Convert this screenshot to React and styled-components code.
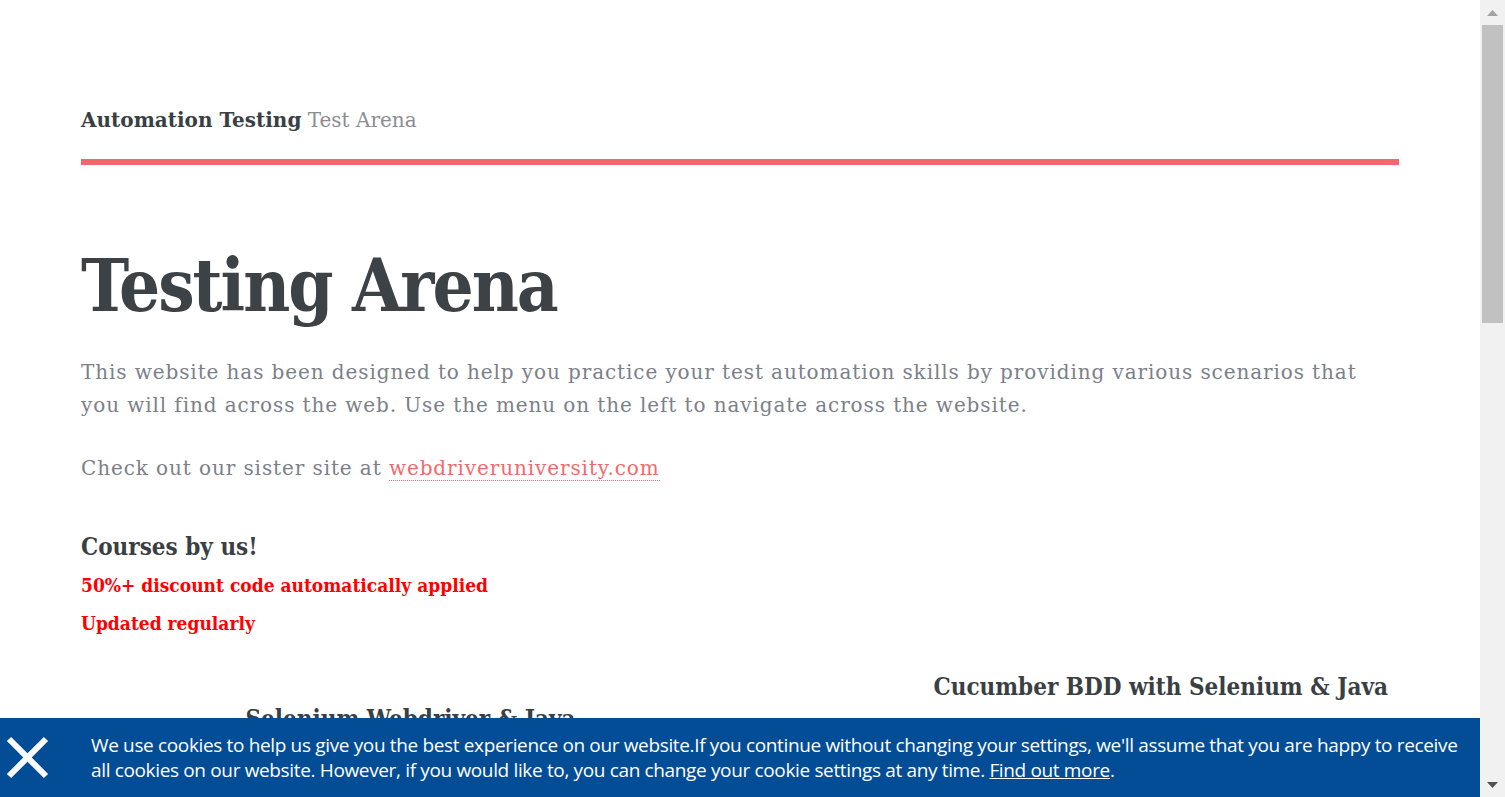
import React from "react";
import styled, { createGlobalStyle } from "styled-components";

const SERIF = `"DejaVu Serif", "Liberation Serif", serif`;

const GlobalStyle = createGlobalStyle`
  body {
    margin: 0;
    background: #fff;
    font-family: ${SERIF};
    color: #3d4247;
  }
`;

const Frame = styled.div`
  display: flex;
  height: 100vh;
  overflow: hidden;
`;

const Viewport = styled.div`
  flex: 1;
  position: relative;
  overflow: hidden;
`;

const Scrollbar = styled.div`
  width: 25px;
  flex-shrink: 0;
  background: #f1f1f1;
  display: flex;
  flex-direction: column;
`;

const ScrollArrow = styled.div`
  height: 25px;
  display: flex;
  align-items: center;
  justify-content: center;
`;

const ScrollTrack = styled.div`
  flex: 1;
  padding: 0 2px;
`;

const ScrollThumb = styled.div`
  height: 298px;
  background: #c1c1c1;
`;

const Container = styled.div`
  width: 1318px;
  margin: 0 auto;
`;

const Header = styled.header`
  padding-top: 106px;
  padding-bottom: 25px;
  border-bottom: 6px solid #f0686b;
  font-size: 20px;
  line-height: 28px;
`;

const Brand = styled.span`
  font-weight: 700;
  color: #3a3f44;
`;

const BrandSub = styled.span`
  color: #8a8d92;
`;

const Title = styled.h1`
  margin: 73px 0 0;
  font-size: 72px;
  line-height: 96px;
  letter-spacing: -2px;
  font-weight: 700;
  font-stretch: condensed;
  color: #3d4247;
`;

const Lead = styled.p`
  margin: ${(p) => p.$top || "22px"} 0 0;
  font-size: 20px;
  line-height: 33px;
  letter-spacing: 0.9px;
  color: #7b8089;
`;

const Link = styled.a`
  color: #f06a6d;
  text-decoration: none;
  border-bottom: 1px dotted #f06a6d;
`;

const Subtitle = styled.h3`
  margin: 46px 0 0;
  font-size: 24px;
  line-height: 32px;
  font-weight: 700;
  font-stretch: condensed;
  color: #3a3f44;
`;

const Note = styled.p`
  margin: ${(p) => p.$top || "8px"} 0 0;
  font-size: 19px;
  line-height: 30px;
  font-weight: 700;
  font-stretch: condensed;
  color: #ff0000;
`;

const Courses = styled.div`
  display: grid;
  grid-template-columns: 1fr 1fr;
  margin-top: 33px;
  padding-bottom: 400px;
`;

const CourseTitle = styled.h3`
  margin: ${(p) => p.$top || "0"} 0 0;
  padding: ${(p) => p.$pad || "0"};
  text-align: ${(p) => p.$align || "center"};
  font-size: 24px;
  line-height: 32px;
  font-weight: 700;
  font-stretch: condensed;
  color: #3a3f44;
`;

const CookieBar = styled.div`
  position: absolute;
  left: 0;
  right: 0;
  bottom: 0;
  height: 79px;
  background: #034c96;
  display: flex;
  align-items: center;
  font-family: "Open Sans", "Liberation Sans", sans-serif;
`;

const CloseButton = styled.button`
  width: 91px;
  height: 79px;
  flex-shrink: 0;
  padding: 0 0 0 6px;
  border: 0;
  background: none;
  display: flex;
  align-items: center;
  cursor: pointer;
`;

const CookieText = styled.p`
  margin: 0;
  padding-right: 20px;
  font-size: 19px;
  line-height: 25px;
  color: #fff;
  letter-spacing: -0.35px;
`;

const CookieLink = styled.a`
  color: #fff;
  text-decoration: underline;
`;

const CloseIcon = () => (
  <svg width="43" height="43" viewBox="0 0 43 43">
    <path d="M3 3 L40 40 M40 3 L3 40" stroke="#fff" strokeWidth="6" />
  </svg>
);

const Arrow = ({ up, color }) => (
  <svg width="11" height="6" viewBox="0 0 11 6">
    <path d={up ? "M0 6 L5.5 0 L11 6 Z" : "M0 0 L5.5 6 L11 0 Z"} fill={color} />
  </svg>
);

export default function App() {
  return (
    <>
      <GlobalStyle />
      <Frame>
        <Viewport>
          <Container>
            <Header>
              <Brand>Automation Testing</Brand>{" "}
              <BrandSub>Test Arena</BrandSub>
            </Header>
            <Title>Testing Arena</Title>
            <Lead>
              This website has been designed to help you practice your test
              automation skills by providing various scenarios that you will
              find across the web. Use the menu on the left to navigate across
              the website.
            </Lead>
            <Lead $top="30px">
              Check out our sister site at{" "}
              <Link href="#">webdriveruniversity.com</Link>
            </Lead>
            <Subtitle>Courses by us!</Subtitle>
            <Note $top="7px">50%+ discount code automatically applied</Note>
            <Note>Updated regularly</Note>
            <Courses>
              <CourseTitle $top="32px">Selenium Webdriver &amp; Java</CourseTitle>
              <CourseTitle $align="right" $pad="0 11px 0 0">
                Cucumber BDD with Selenium &amp; Java
              </CourseTitle>
            </Courses>
          </Container>
          <CookieBar>
            <CloseButton aria-label="close">
              <CloseIcon />
            </CloseButton>
            <CookieText>
              We use cookies to help us give you the best experience on our
              website.If you continue without changing your settings, we'll
              assume that you are happy to receive all cookies on our website.
              However, if you would like to, you can change your cookie settings
              at any time. <CookieLink href="#">Find out more</CookieLink>.
            </CookieText>
          </CookieBar>
        </Viewport>
        <Scrollbar>
          <ScrollArrow>
            <Arrow up color="#a3a3a3" />
          </ScrollArrow>
          <ScrollTrack>
            <ScrollThumb />
          </ScrollTrack>
          <ScrollArrow>
            <Arrow color="#505050" />
          </ScrollArrow>
        </Scrollbar>
      </Frame>
    </>
  );
}
